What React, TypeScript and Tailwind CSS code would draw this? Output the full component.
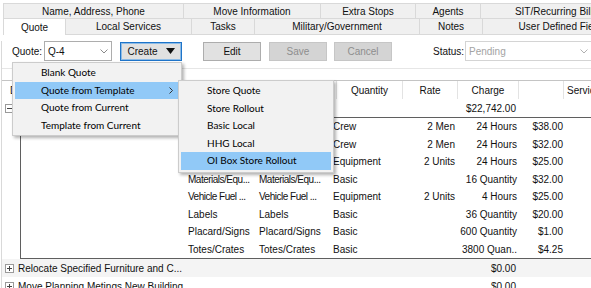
import { ReactNode } from 'react'

const tabsTop = [
    { label: 'Name, Address, Phone', w: 'w-[180px]' },
    { label: 'Move Information', w: 'w-[137px]' },
    { label: 'Extra Stops', w: 'w-[95px]' },
    { label: 'Agents', w: 'w-[65px]' },
    { label: 'SIT/Recurring Billing', w: 'w-[160px]' },
]

const tabsBottom = [
    { label: 'Quote', w: 'w-[63px]', active: true },
    { label: 'Local Services', w: 'w-[126px]' },
    { label: 'Tasks', w: 'w-[63px]' },
    { label: 'Military/Government', w: 'w-[165px]' },
    { label: 'Notes', w: 'w-[63px]' },
    { label: 'User Defined Fields', w: 'w-[160px]' },
]

const detailRows = [
    ['Crew', 'Crew', 'Crew', '2 Men', '24 Hours', '$38.00'],
    ['Crew', 'Crew', 'Crew', '2 Men', '24 Hours', '$32.00'],
    ['Truck', 'Truck', 'Equipment', '2 Units', '24 Hours', '$25.00'],
    ['Materials/Equ...', 'Materials/Equ...', 'Basic', '', '16 Quantity', '$32.00'],
    ['Vehicle Fuel ...', 'Vehicle Fuel ...', 'Equipment', '2 Units', '4 Hours', '$25.00'],
    ['Labels', 'Labels', 'Basic', '', '36 Quantity', '$20.00'],
    ['Placard/Signs', 'Placard/Signs', 'Basic', '', '600 Quantity', '$1.00'],
    ['Totes/Crates', 'Totes/Crates', 'Basic', '', '3800 Quan..', '$4.25'],
]

const createItems = ['Blank Quote', 'Quote from Template', 'Quote from Current', 'Template from Current']
const templateItems = ['Store Quote', 'Store Rollout', 'Basic Local', 'HHG Local', 'OI Box Store Rollout']

function Chevron({ color = '#606060' }: { color?: string }) {
    return (
        <svg width="8" height="5" viewBox="0 0 8 5" fill="none">
            <path d="M0.5 0.5 L4 4 L7.5 0.5" stroke={color} strokeWidth="1" />
        </svg>
    )
}

function Expander({ open }: { open?: boolean }) {
    return (
        <svg width="9" height="9" viewBox="0 0 9 9" className="shrink-0">
            <rect x="0.5" y="0.5" width="8" height="8" fill="#fff" stroke="#9a9a9a" />
            <path d="M2 4.5 H7" stroke="#444" />
            {!open && <path d="M4.5 2 V7" stroke="#444" />}
        </svg>
    )
}

function Button({ children, className }: { children: ReactNode; className: string }) {
    return (
        <div className={`flex h-[19px] w-[58px] shrink-0 items-center justify-center border ${className}`}>
            {children}
        </div>
    )
}

// truncated cells in the source are a touch narrower than plain Arial
const fit = (s: string) => (s.endsWith('...') ? 'tracking-[-0.5px]' : '')

export default function App() {
    return (
        <div className="relative h-[288px] w-[591px] overflow-hidden bg-white font-['Liberation_Sans',Arial,sans-serif] text-[10px] text-[#111]">
            {/* Tab strip */}
            <div className="pl-[3px] pt-[3px]">
                <div className="flex h-[15px] w-[700px] border-t border-[#d9d9d9] bg-[#f0f0f0]">
                    {tabsTop.map((t) => (
                        <div key={t.label} className={`${t.w} flex shrink-0 items-center justify-center border-l border-[#d9d9d9]`}>
                            {t.label}
                        </div>
                    ))}
                </div>
                <div className="flex h-[17px] w-[700px]">
                    {tabsBottom.map((t) =>
                        t.active ? (
                            <div key={t.label} className={`${t.w} flex shrink-0 items-center justify-center border-x border-t border-[#d9d9d9] bg-white`}>
                                {t.label}
                            </div>
                        ) : (
                            <div key={t.label} className={`${t.w} flex shrink-0 items-center justify-center border-y border-r border-[#d9d9d9] bg-[#f0f0f0]`}>
                                {t.label}
                            </div>
                        )
                    )}
                </div>
            </div>

            {/* Tab page */}
            <div className="ml-[1px] h-[260px] border-l border-[#d9d9d9]">
                {/* Toolbar */}
                <div className="mt-[6px] flex h-[20px] items-center">
                    <span className="ml-[10px] w-[32px] shrink-0">Quote:</span>
                    <div className="flex h-[20px] w-[68px] shrink-0 items-center justify-between border border-[#adadad] bg-white pl-[3px] pr-[3px]">
                        <span>Q-4</span>
                        <Chevron color="#8a8a8a" />
                    </div>
                    <div className="ml-[8px] flex h-[19px] w-[62px] shrink-0 items-center justify-center gap-[8px] border border-[#1e74c9] bg-[#e1e1e1] shadow-[inset_0_0_0_1px_#8cbbe6]">
                        <span>Create</span>
                        <svg width="9" height="6" viewBox="0 0 9 6">
                            <path d="M0 0 H9 L4.5 6 Z" fill="#111" />
                        </svg>
                    </div>
                    <Button className="ml-[21px] border-[#adadad] bg-[#e1e1e1]">Edit</Button>
                    <Button className="ml-[8px] border-[#c6c6c6] bg-[#d4d4d4] text-[#8e8e8e]">Save</Button>
                    <Button className="ml-[7px] border-[#c6c6c6] bg-[#d4d4d4] text-[#8e8e8e]">Cancel</Button>
                    <span className="ml-[41px] w-[31px] shrink-0">Status:</span>
                    <div className="ml-[1px] flex h-[20px] w-[130px] shrink-0 items-center justify-between border border-[#d4d4d4] bg-white pl-[3px] pr-[6px] text-[#a3a3a3]">
                        <span>Pending</span>
                        <Chevron color="#b0b0b0" />
                    </div>
                </div>

                {/* Grid */}
                <div className="mt-[7px] border-t border-[#e6e6e6]">
                    <div className="h-[11px]" />
                    {/* Header */}
                    <div className="flex h-[19px] items-center border-t border-[#c4c4c4]">
                        <div className="w-[334px] shrink-0 pl-[8px]">Description</div>
                        <div className="flex h-full w-[66px] shrink-0 items-center justify-center border-l border-[#e3e3e3]">Quantity</div>
                        <div className="flex h-full w-[55px] shrink-0 items-center justify-center border-l border-[#e3e3e3]">Rate</div>
                        <div className="flex h-full w-[61px] shrink-0 items-center justify-center border-l border-[#e3e3e3]">Charge</div>
                        <div className="h-full w-[45px] shrink-0 border-l border-[#e3e3e3]" />
                        <div className="flex h-full w-[80px] shrink-0 items-center border-l border-[#e3e3e3] pl-[3px]">Service</div>
                    </div>
                    {/* Expanded parent row */}
                    <div className="flex h-[18px] items-center">
                        <div className="flex w-[455px] shrink-0 items-center gap-[4px] pl-[3px]">
                            <Expander open />
                            <span>Store Rollout</span>
                        </div>
                        <div className="w-[61px] shrink-0 pr-[2px] text-right">$22,742.00</div>
                    </div>
                    {/* Detail rows */}
                    <div className="ml-[18px] border-y border-l border-[#5f5f5f]">
                        {detailRows.map((r, i) => (
                            <div key={i} className="flex h-[17.5px] items-center whitespace-nowrap">
                                <div className="w-[165px] shrink-0" />
                                <div className={`w-[71px] shrink-0 pl-[2px] ${fit(r[0])}`}>{r[0]}</div>
                                <div className={`w-[74px] shrink-0 pl-[2px] ${fit(r[1])}`}>{r[1]}</div>
                                <div className="w-[72px] shrink-0 pl-[2px]">{r[2]}</div>
                                <div className="w-[54px] shrink-0 pr-[2px] text-right">{r[3]}</div>
                                <div className="w-[62px] shrink-0 pr-[2px] text-right">{r[4]}</div>
                                <div className="w-[46px] shrink-0 pr-[2px] text-right">{r[5]}</div>
                            </div>
                        ))}
                    </div>
                    <div className="flex h-[18px] items-center bg-[#f4f4f4]">
                        <div className="flex w-[455px] shrink-0 items-center gap-[4px] pl-[3px]">
                            <Expander />
                            <span>Relocate Specified Furniture and C...</span>
                        </div>
                        <div className="w-[61px] shrink-0 pr-[2px] text-right">$0.00</div>
                    </div>
                    <div className="flex h-[18px] items-center">
                        <div className="flex w-[455px] shrink-0 items-center gap-[4px] pl-[3px]">
                            <Expander />
                            <span>Move Planning Metings New Building</span>
                        </div>
                        <div className="w-[61px] shrink-0 pr-[2px] text-right">$0.00</div>
                    </div>
                </div>
            </div>

            {/* Create menu */}
            <div className="absolute left-[12px] top-[62px] w-[170px] border border-[#cccccc] bg-[#f2f2f2] px-[2px] py-[1px] font-['Lato','Noto_Sans',sans-serif] text-[10px] text-black shadow-[2px_2px_3px_rgba(0,0,0,0.3)]">
                {createItems.map((item, i) => (
                    <div key={item} className={`flex h-[17.6px] items-center justify-between pl-[26px] pr-[6px] ${i === 1 ? 'bg-[#91c9f7]' : ''}`}>
                        <span>{item}</span>
                        {i === 1 && (
                            <svg width="4" height="7" viewBox="0 0 4 7">
                                <path d="M0.5 0.5 L3.5 3.5 L0.5 6.5" stroke="#333" fill="none" />
                            </svg>
                        )}
                    </div>
                ))}
            </div>

            {/* Template submenu */}
            <div className="absolute left-[178px] top-[80px] w-[156px] border border-[#cccccc] bg-[#f2f2f2] px-[2px] pb-[2px] pt-[1px] font-['Lato','Noto_Sans',sans-serif] text-[10px] text-black shadow-[2px_2px_3px_rgba(0,0,0,0.3)]">
                {templateItems.map((item, i) => (
                    <div key={item} className={`flex h-[17.5px] items-center pl-[26px] ${i === 4 ? 'bg-[#91c9f7]' : ''}`}>
                        {item}
                    </div>
                ))}
            </div>
        </div>
    )
}
